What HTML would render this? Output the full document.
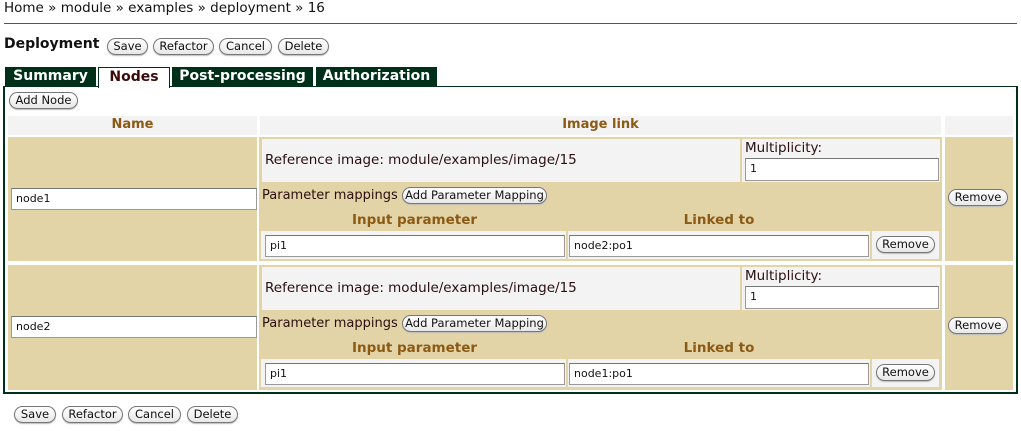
<!DOCTYPE html>
<html><head><meta charset="utf-8"><style>
*{margin:0;padding:0;box-sizing:border-box}
body{width:1021px;height:431px;background:#fff;font-family:"DejaVu Sans","Liberation Sans",sans-serif;color:#2a0f0f;position:relative;overflow:hidden;font-size:13px}
.a{position:absolute}
.btn{position:absolute;height:17px;border:1px solid #777;border-radius:9px;background:linear-gradient(#fff,#e8e8e8);font-size:11.5px;color:#111;text-align:center;line-height:15px;box-shadow:0 1px 1px #bbb;white-space:nowrap}
.tab{position:absolute;top:67px;height:20px;background:#00301a;color:#fff;font-weight:bold;font-size:14px;text-align:center;line-height:19px}
.tan{position:absolute;background:#e3d4a8}
.gr{position:absolute;background:#f3f3f3}
.inp{position:absolute;background:#fff;border:1px solid #999;border-top-color:#777;font-size:11px;line-height:19px;padding-left:4px;color:#111}
.hd{position:absolute;color:#8b5a14;font-weight:bold;font-size:13px;text-align:center}
</style></head><body>
<div class="a" style="left:4px;top:0;font-size:13.5px;color:#111">Home » module » examples » deployment » 16</div>
<div class="a" style="left:4px;top:23px;width:1013px;height:1px;background:#555"></div>
<div class="a" style="left:4px;top:36px;font-weight:bold;font-size:14px;color:#111">Deployment</div>
<div class="btn" style="left:107px;top:38px;width:41px">Save</div>
<div class="btn" style="left:153px;top:38px;width:61px">Refactor</div>
<div class="btn" style="left:219px;top:38px;width:53px">Cancel</div>
<div class="btn" style="left:278px;top:38px;width:51px">Delete</div>
<div class="tab" style="left:5px;width:91px">Summary</div>
<div class="tab" style="left:98px;width:72px;background:#fff;color:#3a0a0a;border:1px solid #00301a;border-bottom:none;height:21px;z-index:2">Nodes</div>
<div class="tab" style="left:172px;width:141px">Post-processing</div>
<div class="tab" style="left:316px;width:121px">Authorization</div>
<div class="a" style="left:3px;top:86px;width:1015px;height:308px;border:2px solid #00301a;border-top-width:1px"></div>
<div class="btn" style="left:9px;top:92px;width:69px">Add Node</div>
<div class="gr" style="left:8px;top:116px;width:249px;height:19px"></div>
<div class="gr" style="left:260px;top:116px;width:681px;height:19px"></div>
<div class="gr" style="left:945px;top:116px;width:68px;height:19px"></div>
<div class="hd" style="left:8px;top:117px;width:249px">Name</div>
<div class="hd" style="left:260px;top:117px;width:681px">Image link</div>

<div class="tan" style="left:8px;top:137px;width:249px;height:124px"></div>
<div class="tan" style="left:259px;top:137px;width:683px;height:124px"></div>
<div class="tan" style="left:945px;top:137px;width:68px;height:124px"></div>
<div class="inp" style="left:11px;top:188px;width:246px;height:22px">node1</div>
<div class="gr" style="left:262px;top:139px;width:478px;height:43px"></div>
<div class="a" style="left:265px;top:152px;font-size:13.5px">Reference image: module/examples/image/15</div>
<div class="gr" style="left:742px;top:139px;width:198px;height:43px"></div>
<div class="a" style="left:745px;top:140px;font-size:13.5px">Multiplicity:</div>
<div class="inp" style="left:745px;top:158px;width:194px;height:23px">1</div>
<div class="a" style="left:262px;top:188px;font-size:13px">Parameter mappings</div>
<div class="btn" style="left:402px;top:187px;width:145px">Add Parameter Mapping</div>
<div class="hd" style="left:262px;top:212px;width:305px;font-size:13.5px">Input parameter</div>
<div class="hd" style="left:568px;top:212px;width:302px;font-size:13.5px">Linked to</div>
<div class="gr" style="left:261px;top:231px;width:305px;height:28px"></div>
<div class="gr" style="left:568px;top:231px;width:302px;height:28px"></div>
<div class="gr" style="left:872px;top:231px;width:67px;height:28px"></div>
<div class="inp" style="left:265px;top:235px;width:300px;height:22px">pi1</div>
<div class="inp" style="left:569px;top:235px;width:300px;height:22px">node2:po1</div>
<div class="btn" style="left:876px;top:236px;width:59px">Remove</div>
<div class="btn" style="left:948px;top:189px;width:60px">Remove</div>

<div class="tan" style="left:8px;top:265px;width:249px;height:125px"></div>
<div class="tan" style="left:259px;top:265px;width:683px;height:125px"></div>
<div class="tan" style="left:945px;top:265px;width:68px;height:125px"></div>
<div class="inp" style="left:11px;top:316px;width:246px;height:22px">node2</div>
<div class="gr" style="left:262px;top:267px;width:478px;height:43px"></div>
<div class="a" style="left:265px;top:280px;font-size:13.5px">Reference image: module/examples/image/15</div>
<div class="gr" style="left:742px;top:267px;width:198px;height:43px"></div>
<div class="a" style="left:745px;top:268px;font-size:13.5px">Multiplicity:</div>
<div class="inp" style="left:745px;top:286px;width:194px;height:23px">1</div>
<div class="a" style="left:262px;top:316px;font-size:13px">Parameter mappings</div>
<div class="btn" style="left:402px;top:315px;width:145px">Add Parameter Mapping</div>
<div class="hd" style="left:262px;top:340px;width:305px;font-size:13.5px">Input parameter</div>
<div class="hd" style="left:568px;top:340px;width:302px;font-size:13.5px">Linked to</div>
<div class="gr" style="left:261px;top:359px;width:305px;height:28px"></div>
<div class="gr" style="left:568px;top:359px;width:302px;height:28px"></div>
<div class="gr" style="left:872px;top:359px;width:67px;height:28px"></div>
<div class="inp" style="left:265px;top:363px;width:300px;height:22px">pi1</div>
<div class="inp" style="left:569px;top:363px;width:300px;height:22px">node1:po1</div>
<div class="btn" style="left:876px;top:364px;width:59px">Remove</div>
<div class="btn" style="left:948px;top:317px;width:60px">Remove</div>

<div class="btn" style="left:14px;top:406px;width:42px">Save</div>
<div class="btn" style="left:62px;top:406px;width:61px">Refactor</div>
<div class="btn" style="left:128px;top:406px;width:53px">Cancel</div>
<div class="btn" style="left:187px;top:406px;width:51px">Delete</div>
</body></html>
